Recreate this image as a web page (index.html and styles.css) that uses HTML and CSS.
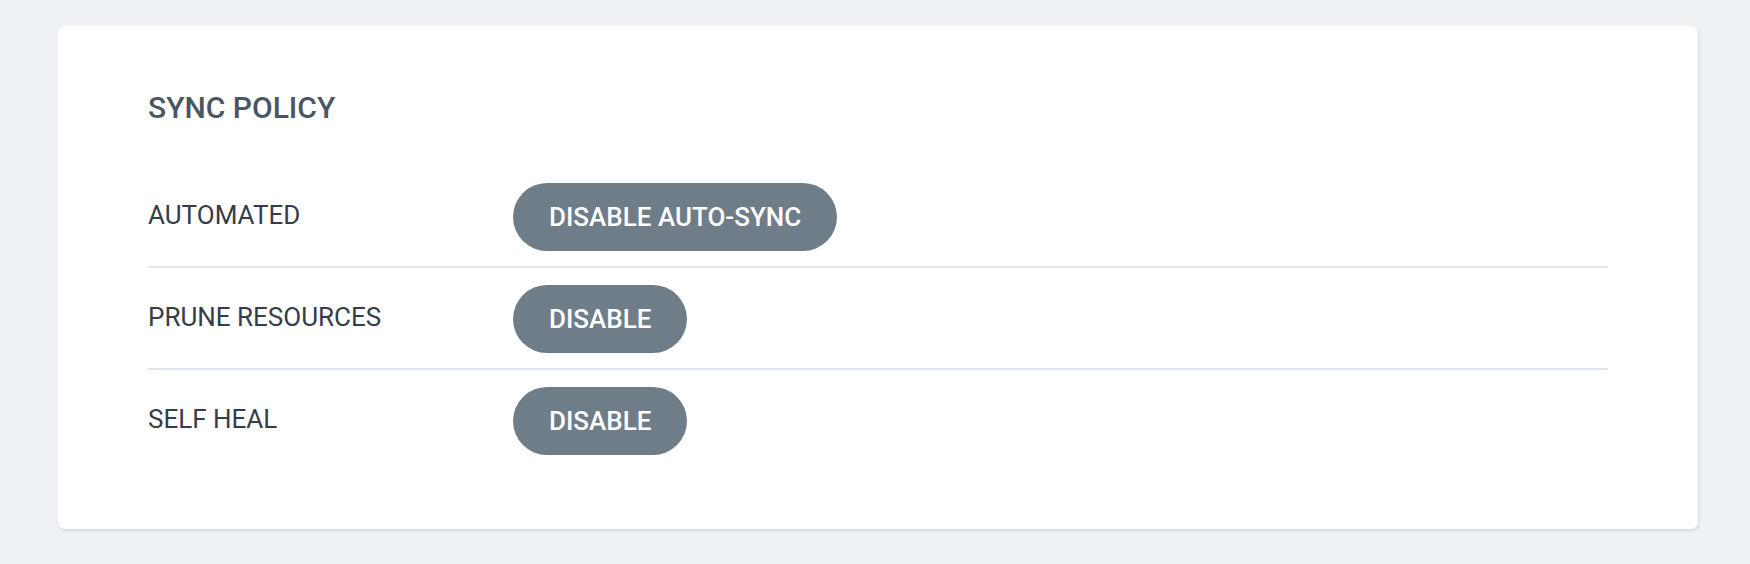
FILE: index.html
```html
<!DOCTYPE html>
<html>
<head>
<meta charset="utf-8">
<link rel="stylesheet" href="styles.css">
</head>
<body>
<div class="card">
  <h3 class="title">SYNC POLICY</h3>
  <div class="rows">
    <div class="row">
      <div class="label">AUTOMATED</div>
      <button class="btn">DISABLE AUTO-SYNC</button>
    </div>
    <div class="row">
      <div class="label">PRUNE RESOURCES</div>
      <button class="btn">DISABLE</button>
    </div>
    <div class="row">
      <div class="label">SELF HEAL</div>
      <button class="btn">DISABLE</button>
    </div>
  </div>
</div>
</body>
</html>
```
FILE: styles.css
```css
html, body {
  margin: 0;
  padding: 0;
  background: #eef2f5;
  font-family: Roboto, "Liberation Sans", sans-serif;
}
body {
  padding: 26px 52px 34px 58px;
}
.card {
  background: #ffffff;
  border-radius: 7px;
  box-shadow: 1px 2px 3px rgba(0, 0, 0, 0.1);
  padding: 64px 90px 59px 90px;
}
.title {
  margin: 0 0 40px 0;
  font-size: 30px;
  line-height: 36px;
  font-weight: 500;
  color: #4a5662;
}
.row {
  display: flex;
  align-items: center;
  padding: 17px 0 15px 0;
  border-bottom: 2px solid #e1e5e9;
}
.row:last-child {
  border-bottom: none;
}
.label {
  width: 365px;
  flex: none;
  font-size: 26px;
  line-height: 30px;
  color: #363c4a;
  padding-bottom: 5px;
}
.btn {
  height: 68px;
  padding: 0 36px;
  border: none;
  border-radius: 34px;
  background: #6f7d89;
  color: #ffffff;
  font-family: Roboto, "Liberation Sans", sans-serif;
  font-size: 26px;
  font-weight: 500;
  cursor: pointer;
}
```
